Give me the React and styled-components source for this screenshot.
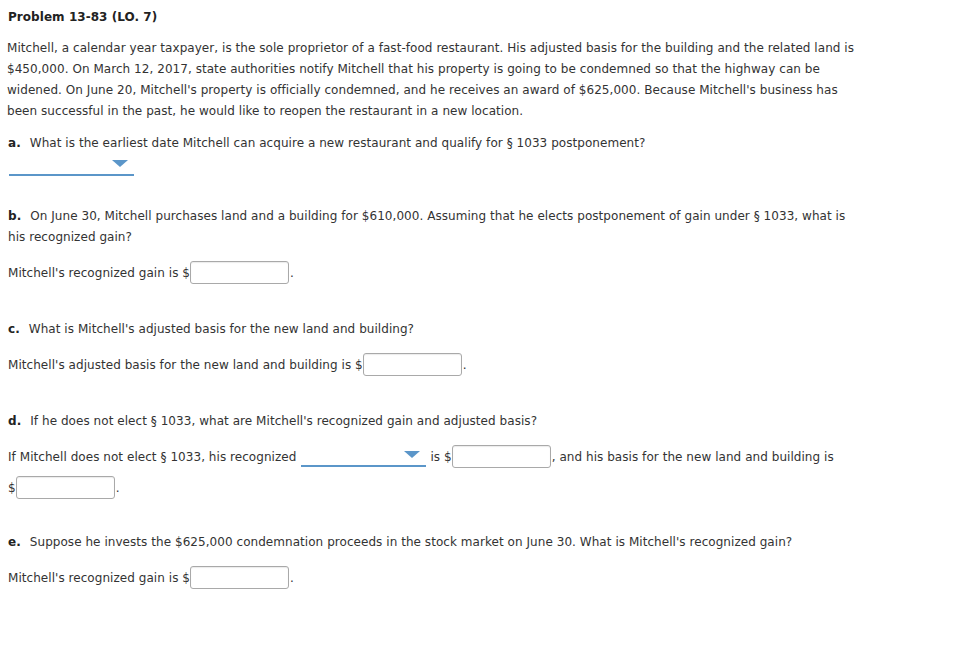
import React from "react";
import styled, { createGlobalStyle } from "styled-components";

const GlobalStyle = createGlobalStyle`
	body {
		margin: 0;
		background: #ffffff;
		font-family: "DejaVu Sans", Verdana, sans-serif;
		color: #333333;
	}
`;

const Page = styled.div`
	padding: 7px 8px 40px 7px;
	width: 852px;
	font-size: 12px;
	letter-spacing: 0.05px;
`;

const Title = styled.h1`
	margin: 0;
	padding-left: 1px;
	font-size: 12px;
	line-height: 20px;
	font-weight: bold;
	color: #222222;
`;

const Intro = styled.p`
	margin: 11px 0 0;
	line-height: 21px;
`;

const Question = styled.div`
	margin-top: ${(p) => p.$top || 30}px;
	line-height: 21px;
	padding-left: 1px;
`;

const Letter = styled.strong`
	font-weight: bold;
	margin-right: 9px;
	color: #222222;
`;

const Answer = styled.div`
	margin-top: 10px;
	line-height: 31px;
	padding-left: 1px;
`;

const Input = styled.span`
	display: inline-block;
	box-sizing: border-box;
	width: 99px;
	height: 23px;
	vertical-align: middle;
	border: 1px solid #a9a9a9;
	border-radius: 3px;
	background: #ffffff;
	box-shadow: inset 0 1px 1px rgba(0, 0, 0, 0.08);
	margin-top: -2px;
`;

const Dot = styled.span`
	margin-left: 1px;
`;

const Select = styled.span`
	display: ${(p) => (p.$block ? "block" : "inline-block")};
	position: relative;
	box-sizing: border-box;
	width: 125px;
	height: ${(p) => (p.$block ? 22 : 18)}px;
	margin: ${(p) => (p.$block ? "0 0 0 2px" : "0 4px 0 5px")};
	vertical-align: middle;
	border-bottom: 2px solid #5b96c9;
`;

const Caret = styled.span`
	position: absolute;
	right: 6px;
	bottom: 7px;
	width: 0;
	height: 0;
	border-left: 8px solid transparent;
	border-right: 8px solid transparent;
	border-top: 7px solid #5b96c9;
`;

const Dropdown = ({ block }) => (
	<Select $block={block}>
		<Caret />
	</Select>
);

const Box = () => (
	<>
		$<Input />
	</>
);

const App = () => {
	return (
		<Page>
			<GlobalStyle />
			<Title>Problem 13-83 (LO. 7)</Title>
			<Intro>
				Mitchell, a calendar year taxpayer, is the sole proprietor of a fast-food restaurant. His adjusted basis for the
				building and the related land is $450,000. On March 12, 2017, state authorities notify Mitchell that his property
				is going to be condemned so that the highway can be widened. On June 20, Mitchell's property is officially
				condemned, and he receives an award of $625,000. Because Mitchell's business has been successful in the past, he
				would like to reopen the restaurant in a new location.
			</Intro>

			<Question $top={11}>
				<Letter>a.</Letter>What is the earliest date Mitchell can acquire a new restaurant and qualify for § 1033
				postponement?
			</Question>
			<Dropdown block />

			<Question $top={30}>
				<Letter>b.</Letter>On June 30, Mitchell purchases land and a building for $610,000. Assuming that he elects
				postponement of gain under § 1033, what is his recognized gain?
			</Question>
			<Answer>
				Mitchell's recognized gain is <Box />
				<Dot>.</Dot>
			</Answer>

			<Question>
				<Letter>c.</Letter>What is Mitchell's adjusted basis for the new land and building?
			</Question>
			<Answer>
				Mitchell's adjusted basis for the new land and building is <Box />
				<Dot>.</Dot>
			</Answer>

			<Question>
				<Letter>d.</Letter>If he does not elect § 1033, what are Mitchell's recognized gain and adjusted basis?
			</Question>
			<Answer>
				If Mitchell does not elect § 1033, his recognized
				<Dropdown />
				is <Box />
				<Dot>, and his basis for the new land and building is</Dot>
				<br />
				<Box />
				<Dot>.</Dot>
			</Answer>

			<Question $top={28}>
				<Letter>e.</Letter>Suppose he invests the $625,000 condemnation proceeds in the stock market on June 30. What is
				Mitchell's recognized gain?
			</Question>
			<Answer>
				Mitchell's recognized gain is <Box />
				<Dot>.</Dot>
			</Answer>
		</Page>
	);
};

export default App;
